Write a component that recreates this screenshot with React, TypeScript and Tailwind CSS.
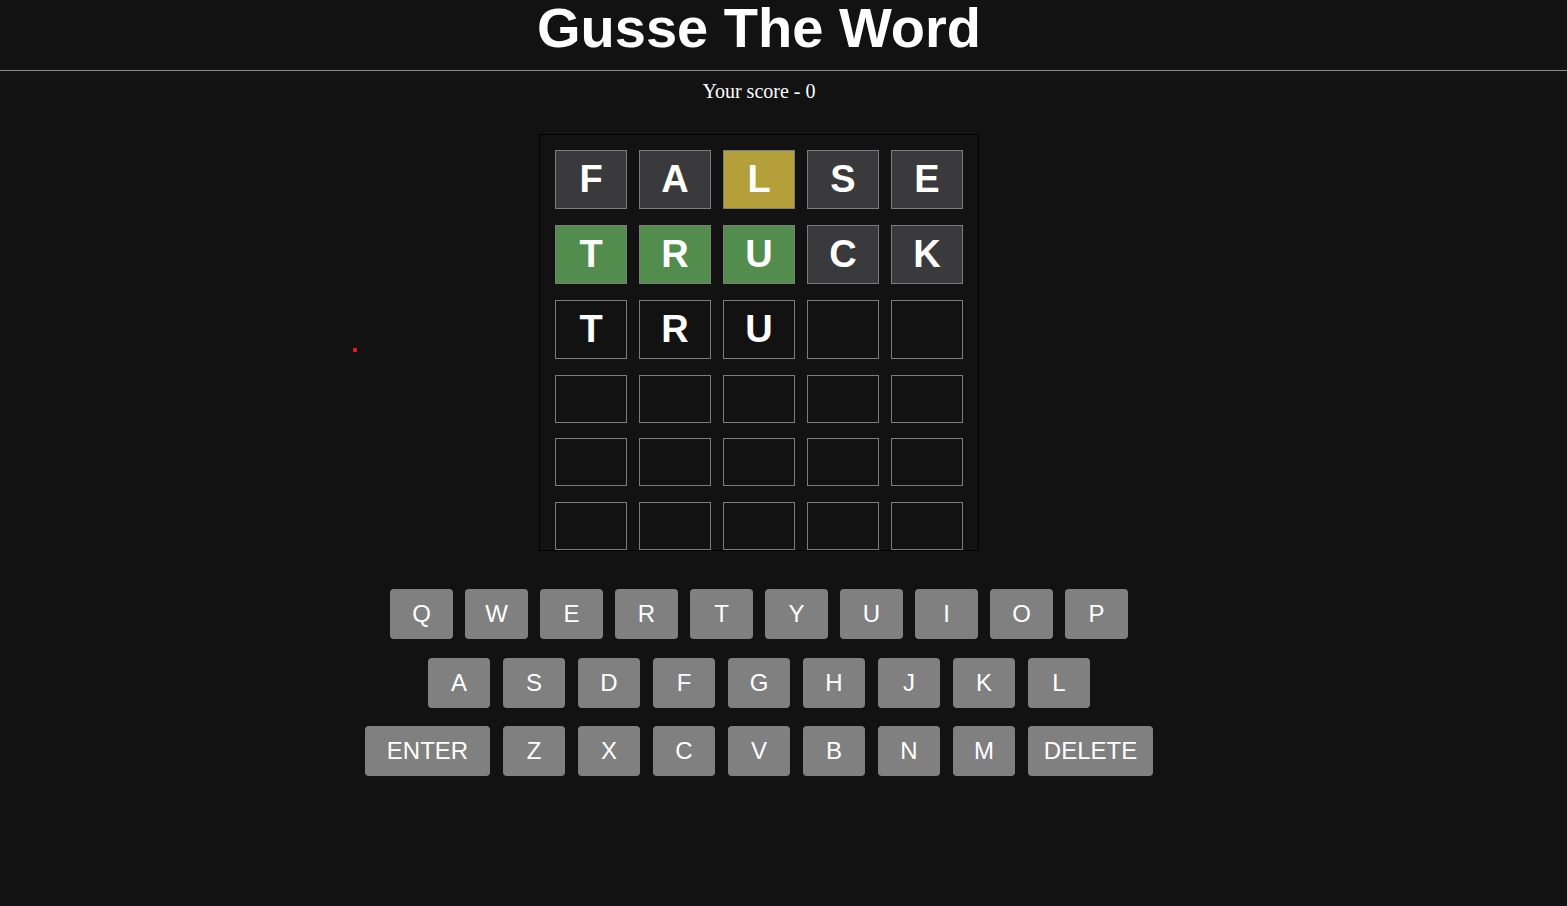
const ROWS: { letter: string; state: "absent" | "present" | "correct" | "typed" | "empty" }[][] = [
  [
    { letter: "F", state: "absent" },
    { letter: "A", state: "absent" },
    { letter: "L", state: "present" },
    { letter: "S", state: "absent" },
    { letter: "E", state: "absent" },
  ],
  [
    { letter: "T", state: "correct" },
    { letter: "R", state: "correct" },
    { letter: "U", state: "correct" },
    { letter: "C", state: "absent" },
    { letter: "K", state: "absent" },
  ],
  [
    { letter: "T", state: "typed" },
    { letter: "R", state: "typed" },
    { letter: "U", state: "typed" },
    { letter: "", state: "empty" },
    { letter: "", state: "empty" },
  ],
];

const KEYS = [
  ["Q", "W", "E", "R", "T", "Y", "U", "I", "O", "P"],
  ["A", "S", "D", "F", "G", "H", "J", "K", "L"],
  ["ENTER", "Z", "X", "C", "V", "B", "N", "M", "DELETE"],
];

const TILE_BG = {
  absent: "bg-[#3a3a3c]",
  present: "bg-[#b59f3b]",
  correct: "bg-[#538d4e]",
  typed: "bg-[#121212]",
  empty: "bg-[#121212]",
};

// spacing above each empty row (the board rows are not evenly spaced)
const EMPTY_GAPS = ["mt-[16px]", "mt-[15px]", "mt-[16px]"];

export default function App() {
  return (
    <div className="relative min-h-[906px] bg-[#121212] text-white">
      {/* Header */}
      <header className="h-[71px] border-b border-[#8a8a8a]">
        <div className="w-[1518px] text-center">
          <h1
            style={{ fontFamily: "'Liberation Sans', Arial, sans-serif" }}
            className="text-[56px] leading-[56px] font-bold"
          >
            Gusse The Word
          </h1>
        </div>
      </header>

      <main className="w-[1518px] flex flex-col items-center">
        <p
          style={{ fontFamily: "'Liberation Serif', 'Times New Roman', serif" }}
          className="mt-[9px] text-[20px] leading-[22px]"
        >
          Your score - 0
        </p>

        {/* Board */}
        <div className="mt-[32px] w-[440px] h-[417px] border border-black bg-[#121212] px-[15px] pt-[15px] flex flex-col">
          {ROWS.map((row, r) => (
            <div key={r} className={`flex gap-[12px] ${r > 0 ? "mt-[16px]" : ""}`}>
              {row.map((t, i) => (
                <div
                  key={i}
                  style={{ fontFamily: "'Liberation Sans', Arial, sans-serif" }}
                  className={`w-[72px] h-[59px] flex items-center justify-center border border-[#7c7c7c] text-[38px] font-bold ${TILE_BG[t.state]}`}
                >
                  {t.letter}
                </div>
              ))}
            </div>
          ))}
          {EMPTY_GAPS.map((mt, r) => (
            <div key={`e${r}`} className={`flex gap-[12px] ${mt}`}>
              {[0, 1, 2, 3, 4].map((i) => (
                <div key={i} className="w-[72px] h-[48px] border border-[#7c7c7c] bg-[#121212]" />
              ))}
            </div>
          ))}
        </div>

        {/* Keyboard */}
        <div
          style={{ fontFamily: "'Liberation Sans', Arial, sans-serif" }}
          className="mt-[38px] flex flex-col items-center gap-[18.5px]"
        >
          {KEYS.map((row, r) => (
            <div key={r} className={`flex ${r === 0 ? "gap-[12px]" : "gap-[13px]"}`}>
              {row.map((k) => (
                <button
                  key={k}
                  className={`${
                    k.length > 1 ? "w-[125px]" : r === 0 ? "w-[63px]" : "w-[62px]"
                  } h-[50px] rounded-[4px] bg-[#808080] text-white text-[24px] flex items-center justify-center`}
                >
                  {k}
                </button>
              ))}
            </div>
          ))}
        </div>
      </main>

      {/* stray dot */}
      <div className="absolute left-[353px] top-[348px] w-[4px] h-[4px] rounded-[1px] bg-[#e31b1b]" />
    </div>
  );
}
